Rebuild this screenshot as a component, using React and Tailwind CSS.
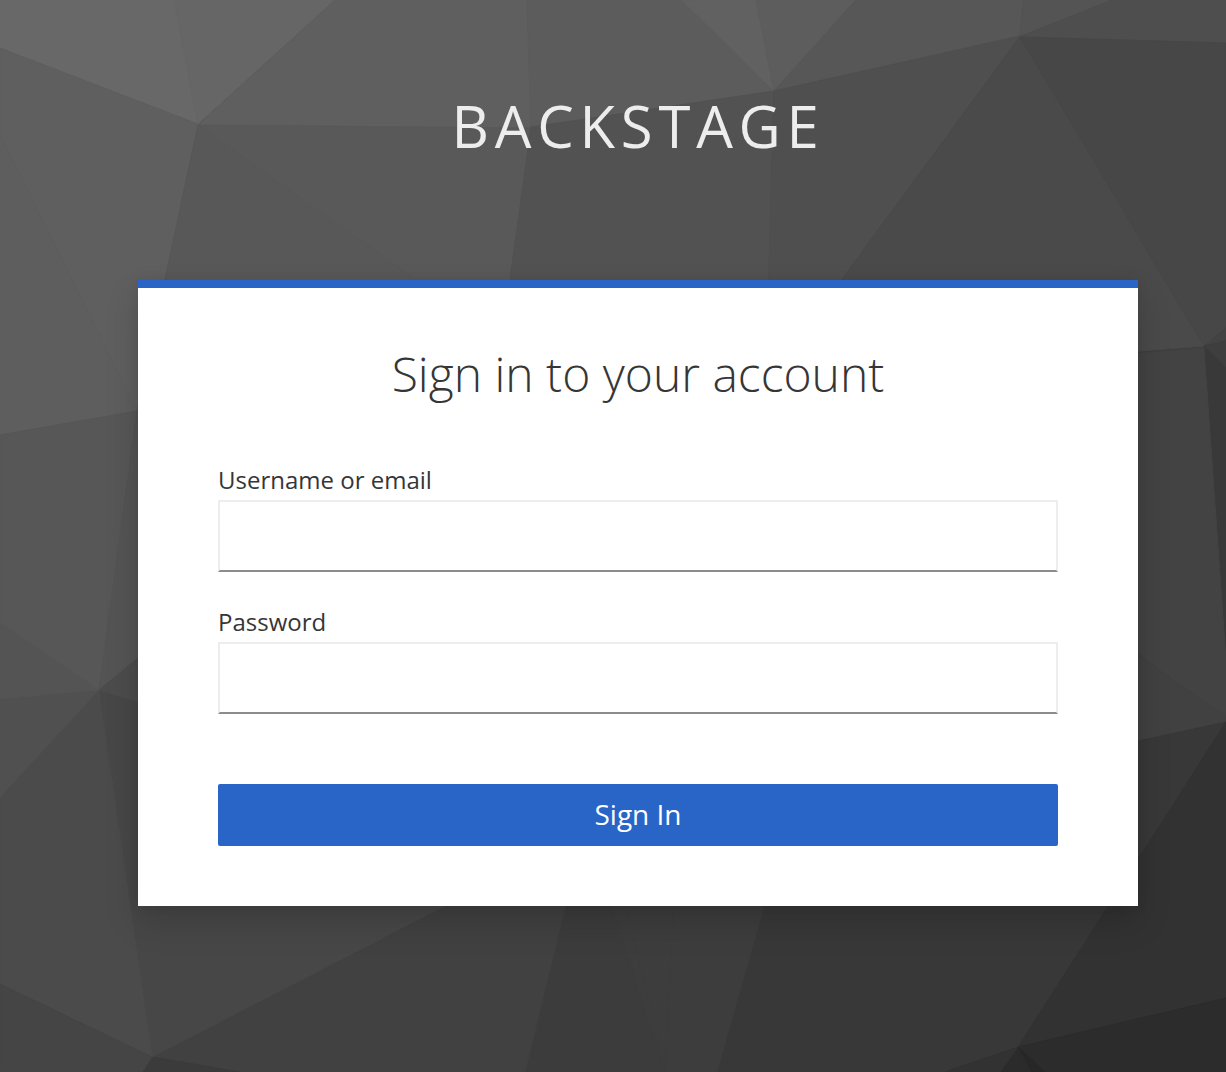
const facets = [
  ["0,0 174,0 198,124 0,48", "#686868"],
  ["174,0 335,0 198,124", "#666666"],
  ["335,0 527,0 531,128 198,125", "#5f5f5f"],
  ["0,48 198,124 137,411 0,135", "#5f5f5f"],
  ["0,135 137,411 0,435", "#5e5e5e"],
  ["198,125 137,410 600,410", "#585858"],
  ["198,125 531,128 495,410 600,410", "#595959"],
  ["527,0 682,0 774,91 531,127", "#5c5c5c"],
  ["682,0 756,0 774,91", "#616161"],
  ["756,0 856,0 774,91", "#5d5d5d"],
  ["856,0 1023,0 1020,36 774,91", "#575757"],
  ["1023,0 1112,0 1020,36", "#545454"],
  ["1112,0 1226,0 1226,43 1020,37", "#4e4e4e"],
  ["531,127 774,91 765,410 492,410", "#525252"],
  ["774,91 1020,36 746,410 765,410", "#4f4f4f"],
  ["1020,37 1204,346 900,370 768,380", "#4a4a4a"],
  ["1020,37 1226,43 1226,328 1204,346", "#474747"],
  ["1204,346 1226,328 1226,341", "#434343"],
  ["1204,346 1226,341 1226,368", "#3e3e3e"],
  ["1204,346 1226,368 1226,660", "#393939"],
  ["1204,348 1226,660 1226,720 1120,640 1120,355", "#434343"],
  ["1120,643 1226,716 1226,722 1120,745", "#414141"],
  ["1226,722 1018,1047 945,1072 717,1072 800,780 1120,745", "#383838"],
  ["1226,722 1226,998 1018,1047", "#323232"],
  ["1018,1047 1226,998 1226,1072 1045,1072", "#2c2c2c"],
  ["1018,1047 1045,1072 1031,1072", "#272727"],
  ["1018,1047 1031,1072 1000,1072", "#2b2b2b"],
  ["1018,1047 1000,1072 945,1072", "#323232"],
  ["570,780 596,860 665,1072 525,1072", "#3c3c3c"],
  ["570,780 800,780 717,1072 665,1072", "#3d3d3d"],
  ["152,1057 680,786 596,780 525,1072 240,1072", "#414141"],
  ["596,780 680,780 665,1072", "#3d3d3d"],
  ["152,1057 240,1072 142,1072", "#3b3b3b"],
  ["99,690 160,708 600,780 592,830 152,1057", "#474747"],
  ["0,797 99,690 152,1057 0,984", "#4b4b4b"],
  ["0,984 152,1057 142,1072 0,1072", "#454545"],
  ["0,699 99,690 0,797", "#505050"],
  ["0,622 99,690 0,699", "#545454"],
  ["0,435 137,411 99,690 0,622", "#575757"],
  ["137,411 160,410 160,640 99,690", "#545454"],
  ["99,690 160,640 160,708", "#4c4c4c"],
];

function Backdrop() {
  return (
    <svg
      aria-hidden="true"
      className="absolute inset-0 h-full w-full"
      viewBox="0 0 1226 1072"
      preserveAspectRatio="xMidYMid slice"
    >
      {facets.map(([points, color]) => (
        <polygon key={points} points={points} fill={color} stroke={color} strokeWidth="1" />
      ))}
    </svg>
  );
}

function Field({ id, label, type, autoComplete }) {
  return (
    <div className="flex flex-col">
      <label htmlFor={id} className="pb-1 text-2xl leading-8">
        {label}
      </label>
      <input
        id={id}
        name={id}
        type={type}
        autoComplete={autoComplete}
        className="h-18 w-full border-2 border-[#ededed] border-b-[#8a8d90] bg-white px-4 text-2xl outline-none"
      />
    </div>
  );
}

export default function App() {
  return (
    <div className="relative min-h-screen bg-[#3d3d3d] font-['Open_Sans',sans-serif] text-[#363636]">
      <Backdrop />
      <div className="relative flex flex-col items-center pb-20 pl-[50px]">
        <header className="pt-20 pb-27 text-[58px] leading-[92px] font-medium tracking-widest text-[#ededed] uppercase">
          Backstage
        </header>
        <main className="w-full max-w-[1000px] border-t-8 border-[#2964c7] bg-white px-20 pt-14 pb-15 shadow-[0_16px_32px_rgba(0,0,0,0.16),0_0_12px_rgba(0,0,0,0.06)]">
          <h1 className="text-center text-5xl leading-[60px] font-light">Sign in to your account</h1>
          <form className="flex flex-col gap-[34px] pt-15" onSubmit={(e) => e.preventDefault()}>
            <Field id="username" label="Username or email" type="text" autoComplete="username" />
            <Field id="password" label="Password" type="password" autoComplete="current-password" />
            <button
              type="submit"
              className="mt-9 h-[62px] w-full rounded-xs bg-[#2964c7] pb-0.5 text-[28px] leading-9 text-white"
            >
              Sign In
            </button>
          </form>
        </main>
      </div>
    </div>
  );
}
